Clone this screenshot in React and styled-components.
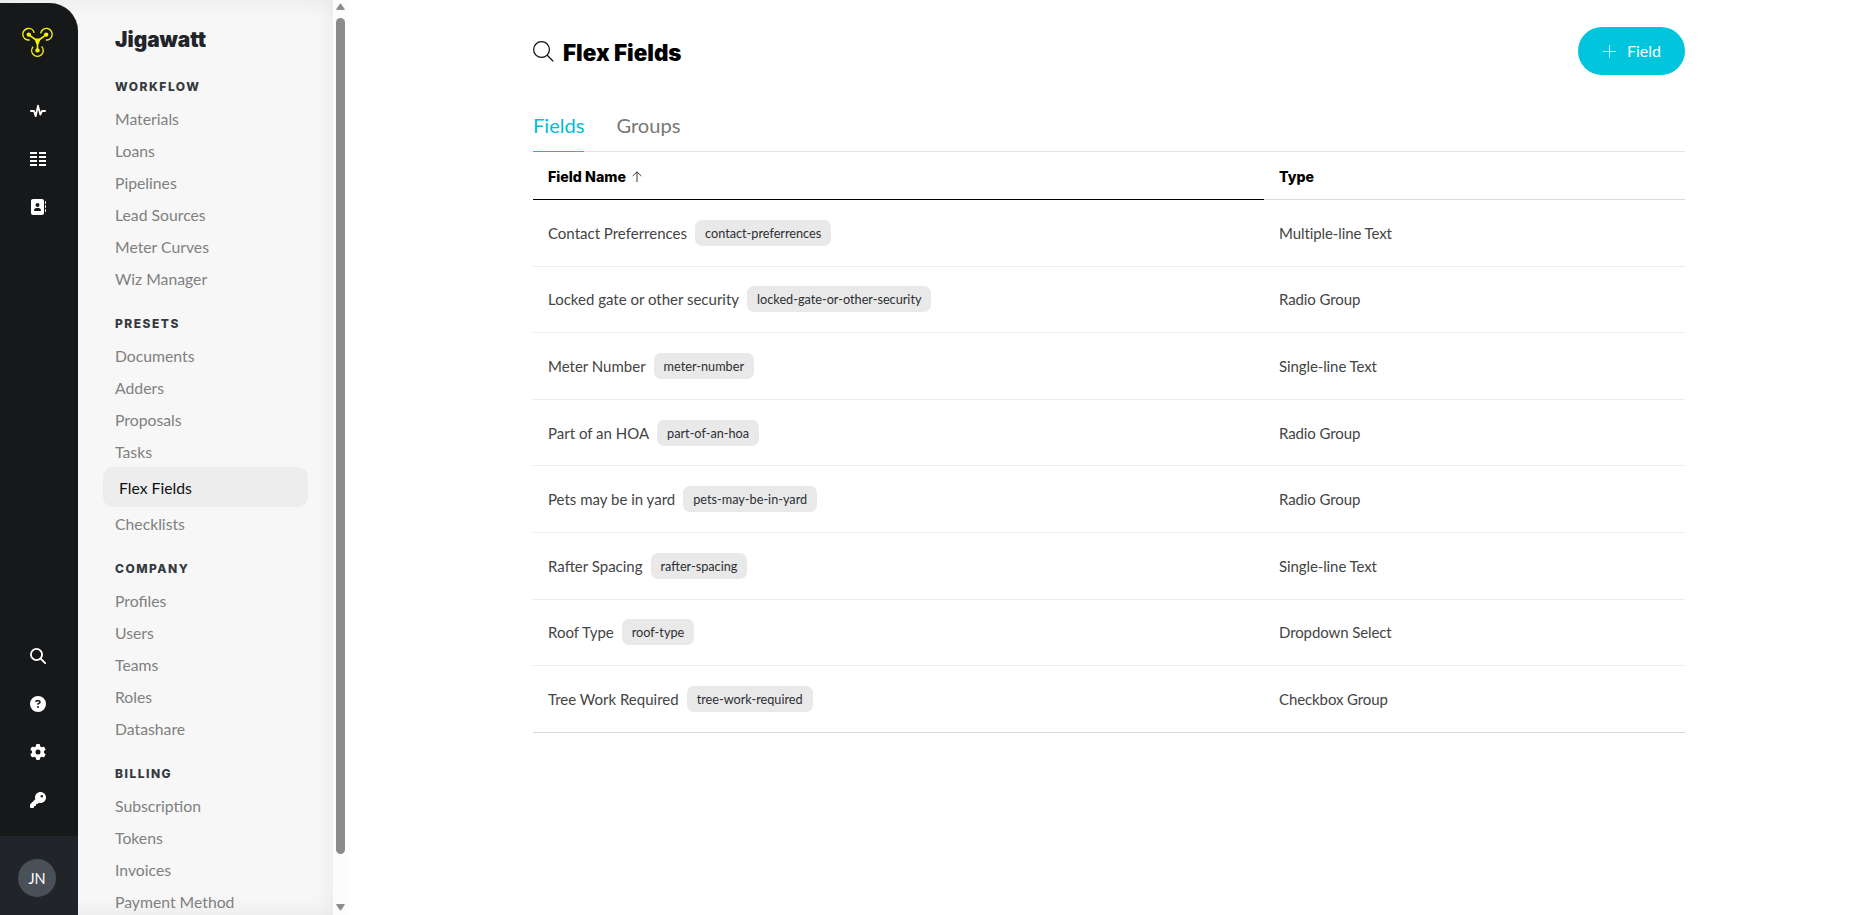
import React from 'react';
import styled, { createGlobalStyle } from 'styled-components';
import { FaAddressBook, FaCircleQuestion, FaGear, FaKey } from 'react-icons/fa6';

const GlobalStyle = createGlobalStyle`
    * {
        box-sizing: border-box;
        margin: 0;
        padding: 0;
    }

    body {
        background: #fff;
        font-family: Lato, 'Liberation Sans', sans-serif;
        overflow: hidden;
    }

    svg {
        display: block;
        flex-shrink: 0;
    }
`;

const Page = styled.div`
    display: flex;
    height: 915px;
    overflow: hidden;
`;

const Sidebar = styled.div`
    display: flex;
    width: 333px;
    height: 100%;
    padding-top: 3px;
    overflow: hidden;
    background: #f7f7f7;
    box-shadow: inset 0 0 22px rgba(0, 0, 0, 0.07);
`;

const Rail = styled.div`
    display: flex;
    flex-direction: column;
    width: 78px;
    height: 912px;
    padding-top: 24px;
    background: #171819;
    border-top-right-radius: 28px;
    overflow: hidden;
`;

const LogoWrap = styled.div`
    padding-left: 22px;
`;

const RailGroup = styled.div`
    display: flex;
    flex-direction: column;
    gap: 32px;
    margin-top: ${({ $bottom }) => ($bottom ? 'auto' : '45px')};
    padding-left: 30px;
    padding-bottom: ${({ $bottom }) => ($bottom ? '28px' : '0')};
    color: #fff;
`;

const RailItem = styled.div`
    display: flex;
    align-items: center;
    justify-content: center;
    width: 16px;
    height: 16px;
    font-size: 16px;
`;

const Account = styled.div`
    display: flex;
    align-items: center;
    width: 100%;
    height: 79px;
    padding: 5px 0 0 18px;
    background: #212529;
`;

const Avatar = styled.div`
    display: flex;
    align-items: center;
    justify-content: center;
    width: 38px;
    height: 38px;
    border-radius: 50%;
    background: #495057;
    color: #fff;
    font-size: 14.5px;
`;

const Nav = styled.nav`
    width: 255px;
    padding: 24px 25px 0;
`;

const Company = styled.h1`
    height: 30px;
    padding-left: 12px;
    color: #212529;
    font-family: Inter, sans-serif;
    font-size: 20.9px;
    font-weight: 900;
    line-height: 25px;
`;

const NavHeading = styled.h2`
    padding: 22px 12px 7px;
    color: #343a40;
    font-family: Inter, sans-serif;
    font-size: 12px;
    font-weight: 800;
    letter-spacing: 1.5px;
    line-height: 16px;
`;

const NavLink = styled.a`
    display: block;
    height: ${({ $active }) => ($active ? '40px' : '32px')};
    padding: 0 ${({ $active }) => ($active ? '16px' : '12px')};
    border-radius: 10px;
    background: ${({ $active }) => ($active ? '#ededed' : 'transparent')};
    color: ${({ $active }) => ($active ? '#111' : '#808080')};
    font-size: 15.75px;
    line-height: ${({ $active }) => ($active ? '41px' : '33px')};
    white-space: nowrap;
`;

const Scrollbar = styled.div`
    display: flex;
    flex-direction: column;
    align-items: center;
    width: 15px;
    height: 100%;
    padding: 3px 0 4px;
    background: #fcfcfc;
`;

const Thumb = styled.div`
    width: 9px;
    height: 836px;
    margin: 8px 0 auto;
    border-radius: 5px;
    background: #8b8b8b;
`;

const Main = styled.main`
    width: 1152px;
    margin-left: 185px;
    padding-top: 27px;
`;

const Header = styled.header`
    display: flex;
    align-items: center;
    height: 48px;
`;

const Title = styled.h2`
    flex: 1;
    margin-left: 9px;
    padding-top: 2px;
    color: #000;
    font-family: Inter, sans-serif;
    font-size: 22.4px;
    font-weight: 900;
`;

const AddButton = styled.button`
    display: flex;
    align-items: center;
    gap: 11px;
    width: 107px;
    height: 48px;
    padding-left: 25px;
    border: 0;
    border-radius: 24px;
    background: #00c5dc;
    color: #fff;
    font-family: inherit;
    font-size: 16px;
    line-height: 50px;
`;

const Tabs = styled.div`
    display: flex;
    gap: 32px;
    height: 77px;
    padding-top: 38px;
    border-bottom: 1px solid #e2e5e5;
`;

const Tab = styled.div`
    height: 39px;
    border-bottom: 1px solid ${({ $active }) => ($active ? '#00c5dc' : 'transparent')};
    color: ${({ $active }) => ($active ? '#00bcd9' : '#777')};
    font-size: 20.1px;
    line-height: 24px;
`;

const TableRow = styled.div`
    display: grid;
    grid-template-columns: 731px 1fr;
`;

const HeadCell = styled.div`
    display: flex;
    align-items: center;
    gap: 6px;
    height: 48px;
    padding: 2px 15px 0;
    border-bottom: 1px solid ${({ $sorted }) => ($sorted ? '#000' : '#dcdcdc')};
    color: #000;
    font-family: Inter, sans-serif;
    font-size: 14.2px;
    font-weight: 800;
`;

const Cell = styled.div`
    display: flex;
    align-items: center;
    gap: 8px;
    height: 66.6px;
    padding: 0 15px;
    border-bottom: 1px solid ${({ $last }) => ($last ? '#dcdcdc' : '#ececec')};
    color: #444;
    font-size: 15px;
    letter-spacing: ${({ $type }) => ($type ? '-0.1px' : 'normal')};
    white-space: nowrap;
`;

const Slug = styled.span`
    height: 26px;
    padding: 0 10px;
    border-radius: 7px;
    background: #e9e9e9;
    color: #2c2f33;
    font-size: 12.7px;
    line-height: 26px;
`;

const Logo = () => (
    <svg width="32" height="31" viewBox="22 26 32 31" fill="none" stroke="#f5f00a">
        <g strokeWidth="1.4" strokeDasharray="26 9.2">
            <circle cx="28.6" cy="33.2" r="5.8" transform="rotate(82 28.6 33.2)" />
            <circle cx="46.4" cy="33.2" r="5.8" transform="rotate(192 46.4 33.2)" />
            <circle cx="37.5" cy="49.6" r="5.8" transform="rotate(-43 37.5 49.6)" />
        </g>
        <path d="M28.6 33.6L37.5 40L46.4 33.6M37.5 40V49.5" strokeWidth="1.6" />
        <path d="M34.2 37.6h6.6L38.4 43.6h-1.8z" fill="#f5f00a" stroke="none" />
        <g fill="#f5f00a" stroke="none">
            <circle cx="28.8" cy="33.6" r="2.2" />
            <circle cx="46.2" cy="33.6" r="2.2" />
            <circle cx="37.5" cy="49.4" r="2.2" />
        </g>
    </svg>
);

const PulseIcon = () => (
    <svg width="16" height="16" viewBox="0 0 16 16" fill="none" stroke="#fff" strokeWidth="1.8" strokeLinecap="round" strokeLinejoin="round">
        <path d="M.9 8H4l1.7 5.2L8 2.6l2.3 9L12 8h3.1" />
    </svg>
);

const ListIcon = () => (
    <svg width="16" height="16" viewBox="0 0 16 16" fill="#fff">
        {[1, 5, 9, 13].map((y) => (
            <path key={y} d={`M0 ${y}h7v2H0zM9 ${y}h7v2H9z`} />
        ))}
    </svg>
);

const SearchIcon = ({ size, weight, color }) => (
    <svg width={size} height={size} viewBox="0 0 16 16" fill="none" stroke={color} strokeWidth={weight} strokeLinecap="round">
        <circle cx="6.5" cy="6.5" r={6.5 - weight / 2} />
        <path d="M11 11l4.2 4.2" />
    </svg>
);

const PlusIcon = () => (
    <svg width="13" height="13" viewBox="0 0 13 13" stroke="#fff" strokeWidth="1" opacity="0.8">
        <path d="M6.5 0v13M0 6.5h13" />
    </svg>
);

const SortIcon = () => (
    <svg width="10" height="12" viewBox="0 0 10 12" fill="none" stroke="#222" strokeWidth="0.9">
        <path d="M5 11V1M.7 5L5 .8L9.3 5" />
    </svg>
);

const ScrollArrow = ({ down }) => (
    <svg width="9" height="7" viewBox="0 0 9 7" fill="#8b8b8b" stroke="#8b8b8b" strokeLinejoin="round">
        <path d={down ? 'M.6.6h7.8L4.5 6.2z' : 'M.6 6.4h7.8L4.5.8z'} />
    </svg>
);

const sections = [
    { title: 'WORKFLOW', links: ['Materials', 'Loans', 'Pipelines', 'Lead Sources', 'Meter Curves', 'Wiz Manager'] },
    { title: 'PRESETS', links: ['Documents', 'Adders', 'Proposals', 'Tasks', 'Flex Fields', 'Checklists'] },
    { title: 'COMPANY', links: ['Profiles', 'Users', 'Teams', 'Roles', 'Datashare'] },
    { title: 'BILLING', links: ['Subscription', 'Tokens', 'Invoices', 'Payment Method'] },
];

const fields = [
    { name: 'Contact Preferrences', slug: 'contact-preferrences', type: 'Multiple-line Text' },
    { name: 'Locked gate or other security', slug: 'locked-gate-or-other-security', type: 'Radio Group' },
    { name: 'Meter Number', slug: 'meter-number', type: 'Single-line Text' },
    { name: 'Part of an HOA', slug: 'part-of-an-hoa', type: 'Radio Group' },
    { name: 'Pets may be in yard', slug: 'pets-may-be-in-yard', type: 'Radio Group' },
    { name: 'Rafter Spacing', slug: 'rafter-spacing', type: 'Single-line Text' },
    { name: 'Roof Type', slug: 'roof-type', type: 'Dropdown Select' },
    { name: 'Tree Work Required', slug: 'tree-work-required', type: 'Checkbox Group' },
];

const App = () => {
    return (
        <>
            <GlobalStyle />
            <Page>
                <Sidebar>
                    <Rail>
                        <LogoWrap>
                            <Logo />
                        </LogoWrap>
                        <RailGroup>
                            <RailItem><PulseIcon /></RailItem>
                            <RailItem><ListIcon /></RailItem>
                            <RailItem><FaAddressBook /></RailItem>
                        </RailGroup>
                        <RailGroup $bottom>
                            <RailItem><SearchIcon size={16} weight={1.8} color="#fff" /></RailItem>
                            <RailItem><FaCircleQuestion /></RailItem>
                            <RailItem><FaGear /></RailItem>
                            <RailItem><FaKey /></RailItem>
                        </RailGroup>
                        <Account>
                            <Avatar>JN</Avatar>
                        </Account>
                    </Rail>
                    <Nav>
                        <Company>Jigawatt</Company>
                        {sections.map((section) => (
                            <div key={section.title}>
                                <NavHeading>{section.title}</NavHeading>
                                {section.links.map((link) => (
                                    <NavLink key={link} $active={link === 'Flex Fields'}>{link}</NavLink>
                                ))}
                            </div>
                        ))}
                    </Nav>
                </Sidebar>
                <Scrollbar>
                    <ScrollArrow />
                    <Thumb />
                    <ScrollArrow down />
                </Scrollbar>
                <Main>
                    <Header>
                        <SearchIcon size={21} weight={0.95} color="#111" />
                        <Title>Flex Fields</Title>
                        <AddButton><PlusIcon />Field</AddButton>
                    </Header>
                    <Tabs>
                        <Tab $active>Fields</Tab>
                        <Tab>Groups</Tab>
                    </Tabs>
                    <TableRow>
                        <HeadCell $sorted>Field Name <SortIcon /></HeadCell>
                        <HeadCell>Type</HeadCell>
                    </TableRow>
                    {fields.map((field, index) => (
                        <TableRow key={field.slug}>
                            <Cell $last={index === fields.length - 1}>
                                {field.name}
                                <Slug>{field.slug}</Slug>
                            </Cell>
                            <Cell $type $last={index === fields.length - 1}>{field.type}</Cell>
                        </TableRow>
                    ))}
                </Main>
            </Page>
        </>
    );
}

export default App
